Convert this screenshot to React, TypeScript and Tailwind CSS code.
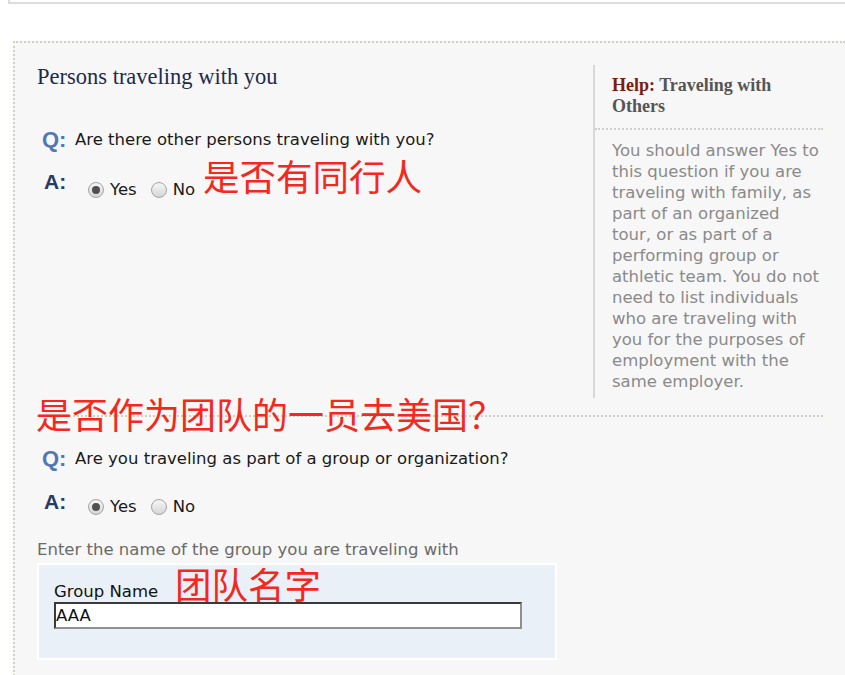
import React from "react";

function Radio({ checked }: { checked?: boolean }) {
  return (
    <span className="flex h-[16px] w-[16px] items-center justify-center rounded-full border border-[#a4a4a4] bg-linear-to-b from-[#f6f6f6] to-[#d6d6d6]">
      {checked && <span className="h-[8px] w-[8px] rounded-full bg-[#505050]" />}
    </span>
  );
}

function YesNo({ top }: { top: string }) {
  return (
    <div className={`flex h-[16px] items-center ${top}`}>
      <Radio checked />
      <span className="ml-[6px] leading-[16px]">Yes</span>
      <span className="ml-[14px]">
        <Radio />
      </span>
      <span className="ml-[6px] leading-[16px]">No</span>
    </div>
  );
}

const helpLines = [
  "You should answer Yes to",
  "this question if you are",
  "traveling with family, as",
  "part of an organized",
  "tour, or as part of a",
  "performing group or",
  "athletic team. You do not",
  "need to list individuals",
  "who are traveling with",
  "you for the purposes of",
  "employment with the",
  "same employer.",
];

export default function App() {
  return (
    <div className="min-h-[675px] overflow-hidden bg-white font-['DejaVu_Sans',sans-serif] text-[16.5px] text-[#1a1a1a]">
      <div className="ml-2 h-[4px] border-b-2 border-l-2 border-[#dcdcdc] bg-white" />

      <div className="ml-[13px] mt-[37px] border-l-2 border-t-2 border-dotted border-[#d2d2c2] bg-[#f7f7f7] px-[22px] pb-10 pt-[20px]">
        {/* section 1 */}
        <div className="flex">
          <div className="flex-1">
            <h2 className="font-['Liberation_Serif',serif] text-[22.5px] leading-[27px] text-[#1c2a4e]">
              Persons traveling with you
            </h2>

            <div className="mt-[38px] flex items-start">
              <span className="ml-[5px] w-[33px] font-['Liberation_Sans',sans-serif] text-[22px] font-bold leading-[24px] text-[#5178b3]">
                Q:
              </span>
              <span className="leading-[24px]">Are there other persons traveling with you?</span>
            </div>

            <div className="mt-[18px] flex items-start">
              <span className="ml-[7px] w-[44px] font-['Liberation_Sans',sans-serif] text-[21px] font-bold leading-[24px] text-[#283a62]">
                A:
              </span>
              <YesNo top="mt-[11.5px]" />
              <span className="ml-[8px] mt-[-12px] font-['Noto_Sans_CJK_SC',sans-serif] text-[36.5px] leading-[36px] text-[#f4281c]">
                是否有同行人
              </span>
            </div>
          </div>

          <div className="mt-[2px] w-[230px] border-l-2 border-[#d8d8d8]">
            <div className="border-b-2 border-dotted border-[#d2d2c2] pb-[11px] pl-[17px] pt-[10px] font-['Liberation_Serif',serif] text-[18px] font-bold leading-[21px] text-[#555555]">
              <span className="text-[#7b1c12]">Help:</span> Traveling with
              <br />
              Others
            </div>
            <div className="whitespace-nowrap pb-[6px] pl-[17px] pt-[10px] leading-[21px] text-[#8a8a8a]">
              {helpLines.map((line) => (
                <div key={line}>{line}</div>
              ))}
            </div>
          </div>
        </div>

        {/* section 2 */}
        <div className="relative mt-[17px] border-t-2 border-dotted border-[#d2d2c2]">
          <span className="absolute left-[-1px] top-[-22px] whitespace-nowrap font-['Noto_Sans_CJK_SC',sans-serif] text-[36px] leading-[36px] text-[#f4281c]">
            是否作为团队的一员去美国？
          </span>
        </div>

        <div className="mt-[29.5px] flex items-start">
          <span className="ml-[5px] w-[33px] font-['Liberation_Sans',sans-serif] text-[22px] font-bold leading-[24px] text-[#5178b3]">
            Q:
          </span>
          <span className="leading-[24px]">Are you traveling as part of a group or organization?</span>
        </div>

        <div className="mt-[19px] flex items-start">
          <span className="ml-[7px] w-[44px] font-['Liberation_Sans',sans-serif] text-[21px] font-bold leading-[24px] text-[#283a62]">
            A:
          </span>
          <YesNo top="mt-[9px]" />
        </div>

        <p className="mt-[24.5px] leading-[21px] text-[#6a6a6a]">
          Enter the name of the group you are traveling with
        </p>

        <div className="relative mt-[3px] h-[97px] w-[520px] border-2 border-white bg-[#e9f0f8] pl-[15px] pt-[17px]">
          <label className="block leading-[20px] text-[#111]">Group Name</label>
          <input
            readOnly
            defaultValue="AAA"
            className="block h-[26.5px] w-[468px] border-2 border-b-[#8f8f8f] border-l-[#3a3a3a] border-r-[#8f8f8f] border-t-[#3a3a3a] bg-white px-0 font-['DejaVu_Sans',sans-serif] text-[16.5px] text-[#111] outline-none"
          />
          <span className="absolute left-[136px] top-[1px] font-['Noto_Sans_CJK_SC',sans-serif] text-[36.5px] leading-[36px] text-[#f4281c]">
            团队名字
          </span>
        </div>
      </div>
    </div>
  );
}
